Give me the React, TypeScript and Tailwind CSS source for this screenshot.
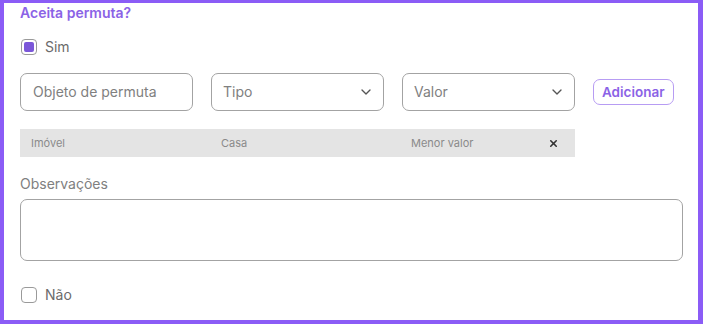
import { ChevronDown, X } from "lucide-react";

function Checkbox({ checked }: { checked?: boolean }) {
  return (
    <span className="flex size-4 items-center justify-center rounded-[4px] border-[1.5px] border-[#9a9a9a] bg-white">
      {checked && <span className="size-[10px] rounded-[2px] bg-[#7b57d9]" />}
    </span>
  );
}

function SelectBox({ label }: { label: string }) {
  return (
    <div className="flex h-[38px] w-[173px] items-center justify-between rounded-[7px] border border-[#a3a3a3] pl-[11px] pr-[9px] text-sm text-[#808080]">
      <span>{label}</span>
      <ChevronDown className="size-4 text-[#555]" strokeWidth={2} />
    </div>
  );
}

export default function App() {
  return (
    <div
      className="h-[324px] w-[703px] border-b-[4px] border-l-[4px] border-r-[5px] border-t-[3px] border-[#8b5cf6] bg-white px-4"
      style={{ fontFamily: "Inter, 'Liberation Sans', sans-serif" }}
    >
      <div className="flex h-5 items-center text-sm font-semibold text-[#8b63e6]">Aceita permuta?</div>

      <label className="mt-4 flex h-4 items-center gap-2 pl-px text-sm text-[#6b6b6b]">
        <Checkbox checked />
        <span>Sim</span>
      </label>

      <div className="mt-[18px] flex items-center gap-[18px]">
        <div className="flex h-[38px] w-[173px] items-center rounded-[7px] border border-[#a3a3a3] px-3 text-sm text-[#808080]">
          Objeto de permuta
        </div>
        <SelectBox label="Tipo" />
        <SelectBox label="Valor" />
        <button
          className="h-[26px] rounded-[7px] border border-[#b79cf3] px-[8px] text-[13.5px] font-semibold text-[#8b63e6]"
          type="button"
        >
          Adicionar
        </button>
      </div>

      <div className="mt-[18px] flex h-[28px] w-[555px] items-center bg-[#e4e4e4] pl-[11px] pr-[16px] text-[11px] text-[#8a8a8a]">
        <span className="w-[190px]">Imóvel</span>
        <span className="w-[190px]">Casa</span>
        <span className="flex-1">Menor valor</span>
        <X className="size-[11px] text-[#333]" strokeWidth={3.5} />
      </div>

      <div className="mt-[17px] flex h-5 items-center text-sm text-[#808080]">Observações</div>
      <div className="mt-[5px] h-[62px] w-[663px] rounded-[7px] border border-[#a3a3a3]" />

      <label className="mt-[26px] flex h-4 items-center gap-2 pl-px text-sm text-[#6b6b6b]">
        <Checkbox />
        <span>Não</span>
      </label>
    </div>
  );
}
